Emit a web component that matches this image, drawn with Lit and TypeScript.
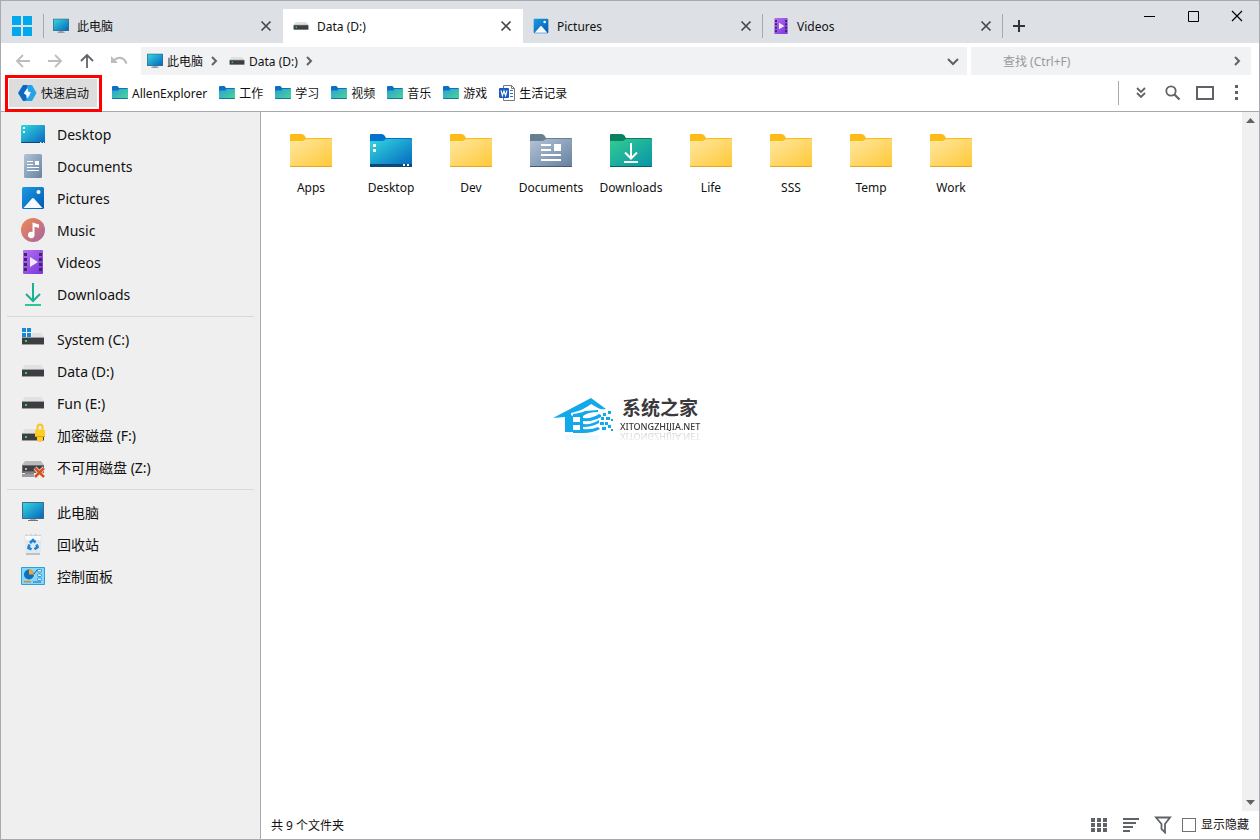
import { LitElement, html, svg, css, nothing } from "lit";
import { customElement, state } from "lit/decorators.js";

let uid = 0;

/* Diagonal two-stop gradient; returns the definition and its paint reference. */
const gradient = (from: string, to: string) => {
  const id = `g${uid++}`;
  return {
    def: svg`<linearGradient id=${id} x1="0" y1="0" x2="1" y2="1"><stop offset="0" stop-color=${from}/><stop offset="1" stop-color=${to}/></linearGradient>`,
    ref: `url(#${id})`,
  };
};

const icon = (size: number, body: unknown, box = "0 0 24 24") =>
  html`<svg width=${size} height=${size} viewBox=${box} aria-hidden="true">${body}</svg>`;

const desktopIcon = (size: number) => {
  const g = gradient("#31dbe0", "#0a64bd");
  return icon(size, svg`${g.def}
    <rect x="0" y="3" width="24" height="18" rx="1" fill=${g.ref}/>
    <path d="M0 20h24v.5q0 .5-1 .5H1q-1 0-1-1z" fill="#084a80"/>
    <path d="M2 5h2v2H2zM2 9h2v2H2z" fill="#fff"/>
    <path d="M19 20h1.500v1H19zM22 20h1v1h-1z" fill="#cfe6f7"/>`);
};

const documentIcon = (size: number) => {
  const g = gradient("#b2c5d9", "#6681a0");
  return icon(size, svg`${g.def}
    <rect x="3" y="0" width="18" height="24" rx="1.500" fill=${g.ref}/>
    <path d="M6 7h6v1H6zM6 10h6v1H6zM6 13h12v1H6zM6 16h12v1H6zM14 7h4v4h-4z" fill="#fff"/>`);
};

const pictureIcon = (size: number) => {
  const g = gradient("#1b9be5", "#0259b0");
  return icon(size, svg`${g.def}
    <rect x="1" y="1" width="22" height="22" rx="1.500" fill=${g.ref}/>
    <circle cx="17.500" cy="6" r="2" fill="#fff"/>
    <path d="M2.500 22l8.500-9.500q1-1 2 0L21.500 22z" fill="#f4faff"/>`);
};

const musicIcon = (size: number) => {
  const g = gradient("#f28a50", "#a464a4");
  return icon(size, svg`${g.def}
    <circle cx="12" cy="12" r="12" fill=${g.ref}/>
    <path d="M11.500 4.500L18 6.500V10l-4.500-1.300V17a3.300 3.300 0 1 1-2-3z" fill="#fff"/>`);
};

const videoIcon = (size: number) => {
  const g = gradient("#b371f0", "#7b34dc");
  return icon(size, svg`${g.def}
    <rect x="2" y="0" width="20" height="24" rx="1" fill=${g.ref}/>
    <path d="M3 3h3v3H3zM3 8h3v3H3zM3 13h3v3H3zM3 18h3v3H3zM18 3h3v3h-3zM18 8h3v3h-3zM18 13h3v3h-3zM18 18h3v3h-3z" fill="#41256e"/>
    <path d="M9 7l8 5-8 5z" fill="#f2eafa"/>`);
};

const downloadIcon = (size: number) =>
  icon(size, svg`<path d="M12 1V18M5 12l7 7 7-7" fill="none" stroke="#1bb08f" stroke-width="2"/>
    <path d="M4 22h16v2H4z" fill="#2fc79a"/>`);

const driveBody = svg`
  <path d="M4 6h16l3 4H1z" fill="#dfe1e3"/>
  <rect x="1" y="10" width="22" height="8" fill="#9b9c9e"/>
  <rect x="1" y="11" width="22" height="6" fill="#3c3e41"/>
  <rect x="4" y="13" width="2" height="2" fill="#35e03f"/>`;

const driveIcon = (size: number) => icon(size, driveBody);

const systemDriveIcon = (size: number) =>
  icon(size, svg`${driveBody}<rect x="0" y="0" width="11" height="10" fill="#efefef"/>
    <path d="M1 1h4v4H1zM6 1h4v4H6zM1 6h4v4H1zM6 6h4v4H6z" fill="#1688d6"/>`);

const lockedDriveIcon = (size: number) =>
  icon(size, svg`${driveBody}
    <path d="M16.500 7V4a2.500 2.500 0 0 1 5 0v3" fill="none" stroke="#fcc419" stroke-width="2"/>
    <path d="M14 7h10v7h-2v3l-2 2h-2l-2-2v-3h-2z" fill="#ffcc24"/>
    <path d="M14 13h10v1H14z" fill="#e0a800"/>`);

const offlineDriveIcon = (size: number) =>
  icon(size, svg`
    <path d="M4 6h16l3 4H1z" fill="#b9babc"/>
    <rect x="1" y="10" width="22" height="8" fill="#6b6d70"/>
    <rect x="2" y="11" width="20" height="5" fill="#3e4043"/>
    <rect x="4" y="13" width="2" height="2" fill="#b5b5b5"/>
    <path d="M4 17h9v2H4z" fill="#85878a"/><path d="M1 19h12v3H1z" fill="#9a9c9f"/>
    <path d="M14 13l9 9M23 13l-9 9" stroke="#efefef" stroke-width="4"/>
    <path d="M14 13l9 9M23 13l-9 9" stroke="#dc4f1e" stroke-width="2.500"/>`);

const monitorIcon = (size: number, box = "0 0 24 24") => {
  const g = gradient("#35d6e0", "#0567bd");
  return icon(size, svg`${g.def}
    <rect x="1" y="2" width="22" height="17" rx=".5" fill="#3f6b86"/>
    <rect x="2" y="3" width="20" height="15" fill=${g.ref}/>
    <path d="M9 19h6v2H9z" fill="#a2abb2"/><path d="M7 20h10v1H7z" fill="#6c757c"/>`, box);
};

const recycleIcon = (size: number) =>
  icon(size, svg`
    <path d="M3 4h18l-2 19H5z" fill="#e3e8ec"/><path d="M4 4h16l-.5 4h-15z" fill="#f7f9fa"/>
    <path d="M3.500 4l2-2 2 1.500L10 1.500l2 2 3-2 2 2 2.500-1 1 1.500z" fill="#cdd3d7"/>
    <path d="M5 21h14v2H5z" fill="#bcc1c5"/>
    <path d="M9 11l3-3 2.500 2.500M15.500 12.500l1 2.500-3 2.200M10.500 17.200l-3-1.200.8-3.500" fill="none" stroke="#1983d8" stroke-width="2.600"/>`);

const controlPanelIcon = (size: number) =>
  icon(size, svg`
    <rect x="0" y="3" width="24" height="18" rx="1" fill="#2f9fd8"/>
    <rect x="1" y="4" width="22" height="16" fill="#85d6f9"/>
    <circle cx="8" cy="10.500" r="5" fill="#1170bd"/><path d="M8 10.500V5.500a5 5 0 0 1 5 5z" fill="#f7a327"/>
    <path d="M13 10l3-4h1" fill="none" stroke="#155f9c"/>
    <g fill="#d4f3fd" stroke="#1b7fc9" stroke-width=".8"><rect x="16.500" y="5.500" width="4" height="2.500" rx="1"/><rect x="16.500" y="10" width="4" height="2.500" rx="1"/><rect x="16.500" y="14" width="4" height="2.500" rx="1"/></g>
    <path d="M3 17h7v1.500H3z" fill="#e38a1c"/><path d="M12 17.500h8v1h-8z" fill="#1170bd"/>`);

const bookmarkFolderIcon = () => {
  const g = gradient("#2b9fd8", "#4bd98d");
  return icon(16, svg`${g.def}
    <path d="M0 2q0-1 1-1h4.500l1.500 2h8q1 0 1 1V12H0z" fill="#0b6fc4"/>
    <path d="M0 5.500h6L7.500 4H16v9q0 1-1 1H1q-1 0-1-1z" fill=${g.ref}/>
    <path d="M0 13h16q0 1-1 1H1q-1 0-1-1z" fill="#1272b4"/>`, "0 0 16 16");
};

const wordIcon = () =>
  icon(16, svg`
    <path d="M4.500.5h8l3 3v12h-11z" fill="#fff" stroke="#77797c"/>
    <path d="M12.500.5v3h3" fill="none" stroke="#77797c"/>
    <path d="M11 5.500h3M11 8.500h3M11 11.500h3" stroke="#2b6cc4"/>
    <rect x="0" y="3" width="10" height="10" rx="1" fill="#185abd"/>
    <path d="M2 5.500l1.400 5L5 6l1.600 4.500L8 5.500" fill="none" stroke="#fff" stroke-width="1.200"/>`, "0 0 16 16");

const quickLaunchIcon = () =>
  icon(20, svg`
    <path d="M6 2h6L9 7l-2 3 3 3v5H6l-5-8z" fill="#0c69c2"/>
    <path d="M10 2h5l4.500 8-4.500 8H8l5-6-2-3z" fill="#27a3ea"/>
    <path d="M10.500 5.500L7 10.500l2.500 1.500v3.500l4.500-6-3-1z" fill="#f4faff"/>`, "0 0 20 20");

type FolderKind = "plain" | "desktop" | "documents" | "downloads";

const folderColours: Record<FolderKind, string[]> = {
  plain: ["#fdbb16", "#ffe7a2", "#ffc937", "#e5a623"],
  desktop: ["#0372cf", "#33d8df", "#0467c0", "#0b4a7f"],
  documents: ["#67808f", "#b3c3d9", "#68819f", "#465c6c"],
  downloads: ["#0a8262", "#33cc91", "#0795a8", "#08625c"],
};

const folderGlyphs = (kind: FolderKind) => {
  switch (kind) {
    case "desktop":
      return svg`<path d="M0 30h42v2q0 1-1 1H1q-1 0-1-1z" fill="#0a4a78"/><path d="M3 10h3v3H3zM3 15h3v3H3zM33 30h2v2h-2zM37 30h2v2h-2z" fill="#fff"/>`;
    case "documents":
      return svg`<path d="M11 10h10v2H11zM11 15h10v2H11zM11 20h20v2H11zM11 25h20v2H11zM24 10h7v7h-7z" fill="#fff"/>`;
    case "downloads":
      return svg`<path d="M21 9v16M15 18.500l6 6 6-6M14 28h14" fill="none" stroke="#fff" stroke-width="2"/>`;
    default:
      return nothing;
  }
};

const folderIcon = (kind: FolderKind) => {
  const [back, from, to, edge] = folderColours[kind];
  const g = gradient(from, to);
  return html`<svg width="42" height="33" viewBox="0 0 42 33" aria-hidden="true">
    ${svg`${g.def}
    <path d="M0 1q0-1 1-1h10.500q2 0 3 1.500L16 4h25q1 0 1 1v5H0z" fill=${back}/>
    <path d="M0 31h42v1q0 1-1 1H1q-1 0-1-1z" fill=${edge}/>
    <path d="M0 8q0-1 1-1h11q1.500 0 2.500-1t2.500-1h24q1 0 1 1v26H1q-1 0-1-1z" fill=${g.ref}/>
    <path d="M0 32h42q0 1-1 1H1q-1 0-1-1z" fill=${edge}/>
    ${folderGlyphs(kind)}`}
  </svg>`;
};

const line = (d: string, width = 2, size = 16) =>
  icon(size, svg`<path d=${d} fill="none" stroke="currentColor" stroke-width=${width}/>`, `0 0 ${size} ${size}`);

const closeGlyph = () => line("M3.500 3.500l9 9M12.500 3.500l-9 9", 1.6);
const chevronRight = () => line("M6 4l4 4-4 4");

@customElement("app-root")
export class AppRoot extends LitElement {
  @state() private activeTab = 1;

  static styles = css`
    :host {
      display: flex;
      flex-direction: column;
      position: relative;
      box-sizing: border-box;
      height: 100vh;
      overflow: hidden;
      border: 1px solid #a9aab0;
      background: #fff;
      color: #111;
      font: 12px/16px "Noto Sans", "Noto Sans CJK SC", sans-serif;
    }
    button, input { font: inherit; color: inherit; }
    button {
      display: flex;
      align-items: center;
      padding: 0;
      border: 0;
      background: none;
      white-space: nowrap;
    }
    a { color: inherit; text-decoration: none; }
    svg { display: block; flex: none; }
    .label { padding-top: 2px; }
    .glyph { justify-content: center; color: #5f6368; }
    .titlebar { display: flex; height: 42px; background: #dde0e5; }
    .logo { display: flex; align-items: center; justify-content: center; width: 42px; padding-top: 8px; }
    .tabs { display: flex; padding-top: 8px; flex: 0 1 960px; min-width: 0; }
    .tab { display: flex; flex: 1 1 0; min-width: 0; align-items: center; padding: 0 5px 0 10px; }
    .tab.divided { background: linear-gradient(#a9aab0, #a9aab0) no-repeat right 5px / 1px 24px; }
    .tab.first { background: linear-gradient(#a9aab0, #a9aab0) no-repeat left 5px / 1px 24px; }
    .tab.active { background: #fff; }
    .tab-title { flex: 1; gap: 8px; height: 34px; min-width: 0; }
    .tab-close { width: 24px; height: 24px; color: #444; }
    .new-tab { width: 32px; margin-top: 8px; color: #333; }
    .window-buttons { display: flex; margin-left: auto; }
    .window-button { width: 44px; height: 30px; color: #000; }
    .navbar { display: flex; gap: 4px; padding: 4px 8px 0 6px; }
    .history { display: flex; width: 130px; }
    .nav-button { width: 32px; height: 28px; }
    .nav-button:disabled { color: #bdbdbd; }
    .address { display: flex; flex: 820 1 0; height: 28px; padding-left: 6px; background: #f1f2f4; }
    .crumb { gap: 4px; }
    .crumb-arrow { width: 22px; margin-right: 4px; }
    .address-menu { width: 28px; margin-left: auto; }
    .search { display: flex; flex: 280 1 0; background: #f1f2f4; }
    .search-field { flex: 1; min-width: 0; padding: 2px 0 0 32px; border: 0; outline: 0; background: none; }
    .search-field::placeholder { color: #999; opacity: 1; }
    .search-go { width: 28px; }
    .bookmarks { display: flex; align-items: center; height: 36px; padding: 0 6px 0 8px; border-bottom: 1px solid #a9aab0; }
    .quick { position: relative; gap: 4px; width: 88px; height: 28px; margin-right: 15px; padding-left: 8px; background: #ddd; }
    .quick::after { content: ""; position: absolute; inset: -4px -5px -5px -4px; border: 3px solid #f00; z-index: 1; }
    .bookmark-list { display: flex; gap: 12px; }
    .bookmark { display: flex; align-items: center; gap: 4px; white-space: nowrap; }
    .tools { display: flex; margin-left: auto; padding-left: 7px; background: linear-gradient(#a9aab0, #a9aab0) no-repeat left center / 1px 24px; }
    .tool { width: 32px; height: 28px; }
    .workspace { display: flex; flex: 1; min-height: 0; }
    .sidebar { box-sizing: border-box; flex: none; width: 260px; padding: 6px 6px 0; border-right: 1px solid #a9aab0; background: #efefef; font-size: 14px; line-height: 20px; }
    .place { display: flex; align-items: center; gap: 12px; height: 32px; padding-left: 14px; }
    .group + .group { margin-top: 6px; padding-top: 6px; border-top: 1px solid #d9d9db; }
    .main { display: flex; flex-direction: column; flex: 1; min-width: 0; }
    .view { display: flex; flex: 1; min-height: 0; }
    .files { flex: 1; display: grid; grid-template-columns: repeat(auto-fill, 80px); align-content: start; padding: 22px 10px 0; }
    .file { display: flex; flex-direction: column; align-items: center; gap: 13px; }
    .scrollbar { display: flex; flex-direction: column; justify-content: space-between; width: 17px; background: #f0f0f0; }
    .scroll-button { height: 17px; }
    .statusbar { display: flex; align-items: center; height: 28px; padding: 0 10px; }
    .status-tools { display: flex; align-items: center; margin-left: auto; }
    .status-tool { width: 32px; height: 28px; }
    .hidden-toggle { display: flex; align-items: center; gap: 5px; margin-left: 3px; white-space: nowrap; }
    .checkbox { appearance: none; width: 14px; height: 14px; margin: 0; border: 1px solid #707070; background: #fff; }
    .checkbox:checked { background: #5f6368; }
    .watermark { position: absolute; left: 50%; top: 50%; display: flex; gap: 6px; transform: translate(-77px, -23px); pointer-events: none; color: #3a3a3c; }
    .watermark-text { display: flex; flex-direction: column; }
    .watermark-name { padding-left: 2px; font-weight: 700; font-size: 19px; line-height: 22px; }
    .watermark-site { font-weight: 500; font-size: 9px; line-height: 10px; padding-top: 3px; -webkit-box-reflect: below -1px linear-gradient(transparent, rgba(0, 0, 0, 0.25)); }
  `;

  private readonly tabs = [
    { title: "此电脑", icon: monitorIcon(16, "1 1 22 22") },
    { title: "Data (D:)", icon: driveIcon(16) },
    { title: "Pictures", icon: pictureIcon(16) },
    { title: "Videos", icon: videoIcon(16) },
  ];

  private readonly bookmarks = ["AllenExplorer", "工作", "学习", "视频", "音乐", "游戏"].map((label) => ({
    label,
    icon: bookmarkFolderIcon(),
  })).concat([{ label: "生活记录", icon: wordIcon() }]);

  private readonly places = [
    [
      { label: "Desktop", icon: desktopIcon(24) },
      { label: "Documents", icon: documentIcon(24) },
      { label: "Pictures", icon: pictureIcon(24) },
      { label: "Music", icon: musicIcon(24) },
      { label: "Videos", icon: videoIcon(24) },
      { label: "Downloads", icon: downloadIcon(24) },
    ],
    [
      { label: "System (C:)", icon: systemDriveIcon(24) },
      { label: "Data (D:)", icon: driveIcon(24) },
      { label: "Fun (E:)", icon: driveIcon(24) },
      { label: "加密磁盘 (F:)", icon: lockedDriveIcon(24) },
      { label: "不可用磁盘 (Z:)", icon: offlineDriveIcon(24) },
    ],
    [
      { label: "此电脑", icon: monitorIcon(24) },
      { label: "回收站", icon: recycleIcon(24) },
      { label: "控制面板", icon: controlPanelIcon(24) },
    ],
  ];

  private readonly files = (
    [
      ["Apps", "plain"], ["Desktop", "desktop"], ["Dev", "plain"],
      ["Documents", "documents"], ["Downloads", "downloads"], ["Life", "plain"],
      ["SSS", "plain"], ["Temp", "plain"], ["Work", "plain"],
    ] as [string, FolderKind][]
  ).map(([name, kind]) => ({ name, icon: folderIcon(kind) }));

  private readonly pathMonitor = monitorIcon(16, "1 1 22 22");

  private renderTitlebar() {
    return html`<header class="titlebar">
      <div class="logo">${icon(20, svg`<path d="M0 0h9v9H0zM11 0h9v9h-9zM0 11h9v9H0zM11 11h9v9h-9z" fill="#00a8ee"/>`, "0 0 20 20")}</div>
      <div class="tabs">
        ${this.tabs.map((tab, i) => {
          const mode = i === this.activeTab ? "active" : i === 0 ? "first" : i > this.activeTab ? "divided" : "";
          return html`<div class="tab ${mode}">
            <button class="tab-title" @click=${() => (this.activeTab = i)}>${tab.icon}<span class="label">${tab.title}</span></button>
            <button class="glyph tab-close" aria-label="Close tab">${closeGlyph()}</button>
          </div>`;
        })}
      </div>
      <button class="glyph new-tab" aria-label="New tab">${line("M8 2v12M2 8h12")}</button>
      <div class="window-buttons">
        <button class="glyph window-button" aria-label="Minimize">${line("M3 8.500h11", 1)}</button>
        <button class="glyph window-button" aria-label="Maximize">${line("M3.500 3.500h10v10h-10z", 1)}</button>
        <button class="glyph window-button" aria-label="Close">${line("M3 3l10 10M13 3L3 13", 1.2)}</button>
      </div>
    </header>`;
  }

  private renderNavbar() {
    return html`<nav class="navbar">
      <div class="history">
        <button class="glyph nav-button" aria-label="Back" disabled>${line("M15 8H2M8 2L2 8l6 6", 1.8)}</button>
        <button class="glyph nav-button" aria-label="Forward" disabled>${line("M1 8h13M8 2l6 6-6 6", 1.8)}</button>
        <button class="glyph nav-button" aria-label="Up">${line("M8 15V2M2 8l6-6 6 6", 1.8)}</button>
        <button class="glyph nav-button" aria-label="Undo" disabled>
          ${icon(18, svg`<path d="M1 4v7h7L5.500 8.500C9 5.500 14 7 15.500 12l2-.7C15.500 4.500 8.500 3 4 7z" fill="currentColor"/>`, "0 0 18 18")}
        </button>
      </div>
      <div class="address">
        <button class="crumb">${this.pathMonitor}<span class="label">此电脑</span></button>
        <button class="glyph crumb-arrow" aria-label="Subfolders">${chevronRight()}</button>
        <button class="crumb">${driveIcon(16)}<span class="label">Data (D:)</span></button>
        <button class="glyph crumb-arrow" aria-label="Subfolders">${chevronRight()}</button>
        <button class="glyph address-menu" aria-label="Address history">${line("M3 6l5 5 5-5")}</button>
      </div>
      <div class="search">
        <input class="search-field" type="text" aria-label="查找" placeholder="查找 (Ctrl+F)" />
        <button class="glyph search-go" aria-label="Go">${chevronRight()}</button>
      </div>
    </nav>`;
  }

  private renderBookmarks() {
    return html`<div class="bookmarks">
      <button class="quick">${quickLaunchIcon()}<span class="label">快速启动</span></button>
      <div class="bookmark-list">
        ${this.bookmarks.map((b) => html`<a class="bookmark" href="#">${b.icon}<span class="label">${b.label}</span></a>`)}
      </div>
      <div class="tools">
        <button class="glyph tool" aria-label="More">${line("M4 3l4 4 4-4M4 8l4 4 4-4", 1.8)}</button>
        <button class="glyph tool" aria-label="Search">${icon(16, svg`<circle cx="6" cy="6" r="4.700" fill="none" stroke="currentColor" stroke-width="1.800"/><path d="M9.500 9.500l5 5" stroke="currentColor" stroke-width="2.200"/>`, "0 0 16 16")}</button>
        <button class="glyph tool" aria-label="Layout">${line("M1 3h16v12H1z", 2, 18)}</button>
        <button class="glyph tool" aria-label="Menu">${icon(16, svg`<path d="M6 0h3v3H6zM6 6h3v3H6zM6 12h3v3H6z" fill="currentColor"/>`, "0 0 16 16")}</button>
      </div>
    </div>`;
  }

  private renderStatusbar() {
    return html`<footer class="statusbar">
      <span class="label">共 9 个文件夹</span>
      <div class="status-tools">
        <button class="glyph status-tool" aria-label="Grid view">${icon(16, svg`<path d="M0 1h4v4H0zM6 1h4v4H6zM12 1h4v4h-4zM0 6h4v4H0zM6 6h4v4H6zM12 6h4v4h-4zM0 11h4v4H0zM6 11h4v4H6zM12 11h4v4h-4z" fill="currentColor"/>`, "0 0 16 16")}</button>
        <button class="glyph status-tool" aria-label="Sort">${line("M0 2h16M0 6h13M0 10h10M0 14h7", 2)}</button>
        <button class="glyph status-tool" aria-label="Filter">${icon(18, svg`<path d="M2 1.500h14L11 8v8.500L7.500 13V8z" fill="none" stroke="currentColor" stroke-width="1.800"/>`, "0 0 18 18")}</button>
        <label class="hidden-toggle"><input class="checkbox" type="checkbox" /><span>显示隐藏</span></label>
      </div>
    </footer>`;
  }

  private renderWatermark() {
    return html`<div class="watermark">
      <svg width="61" height="46" viewBox="0 0 61 46" aria-hidden="true">
        <g fill="#12a8ea">
          <path d="M0 21L38 1l15 11q-5 1-8-1l-7-4q-6 5-16 8l-4 1v2l2 1v16h-8V20z"/>
          <path d="M20 17q8-1 12-3l13-1v2q-10 0-15 4v17H20v-3h7v-5h-7v-3h7v-5h-7z"/>
          <path d="M30 21q9 1 16-4l2 1v2q-8 5-18 4zM30 27q9 1 16-4v3q-7 4-16 4zM30 32q8 1 15-2l2 2q-7 4-17 4z"/>
          <path d="M50 16h3v3h-3zM55 14h3v3h-3zM48 20h3v3h-3zM53 20h4v3h-4zM47 25h4v3h-4zM52 25h3v3h-3zM58 22h2v2h-2zM49 30h4v3h-4zM55 28h3v3h-3zM58 32h2v2h-2z"/>
        </g>
        <path d="M12 38h34v5H12z" fill="#12a8ea" opacity=".06"/>
      </svg>
      <div class="watermark-text">
        <span class="watermark-name">系统之家</span>
        <span class="watermark-site">XITONGZHIJIA.NET</span>
      </div>
    </div>`;
  }

  render() {
    return html`
      ${this.renderTitlebar()} ${this.renderNavbar()} ${this.renderBookmarks()}
      <div class="workspace">
        <aside class="sidebar">
          ${this.places.map((group) => html`<div class="group">
            ${group.map((p) => html`<a class="place" href="#">${p.icon}<span class="label">${p.label}</span></a>`)}
          </div>`)}
        </aside>
        <main class="main">
          <div class="view">
            <div class="files">
              ${this.files.map((f) => html`<a class="file" href="#">${f.icon}<span>${f.name}</span></a>`)}
            </div>
            <div class="scrollbar">
              <button class="glyph scroll-button" aria-label="Scroll up">${icon(9, svg`<path d="M0 7l4.500-5L9 7z" fill="currentColor"/>`, "0 0 9 9")}</button>
              <button class="glyph scroll-button" aria-label="Scroll down">${icon(9, svg`<path d="M0 2l4.500 5L9 2z" fill="currentColor"/>`, "0 0 9 9")}</button>
            </div>
          </div>
          ${this.renderStatusbar()}
        </main>
      </div>
      ${this.renderWatermark()}
    `;
  }
}
